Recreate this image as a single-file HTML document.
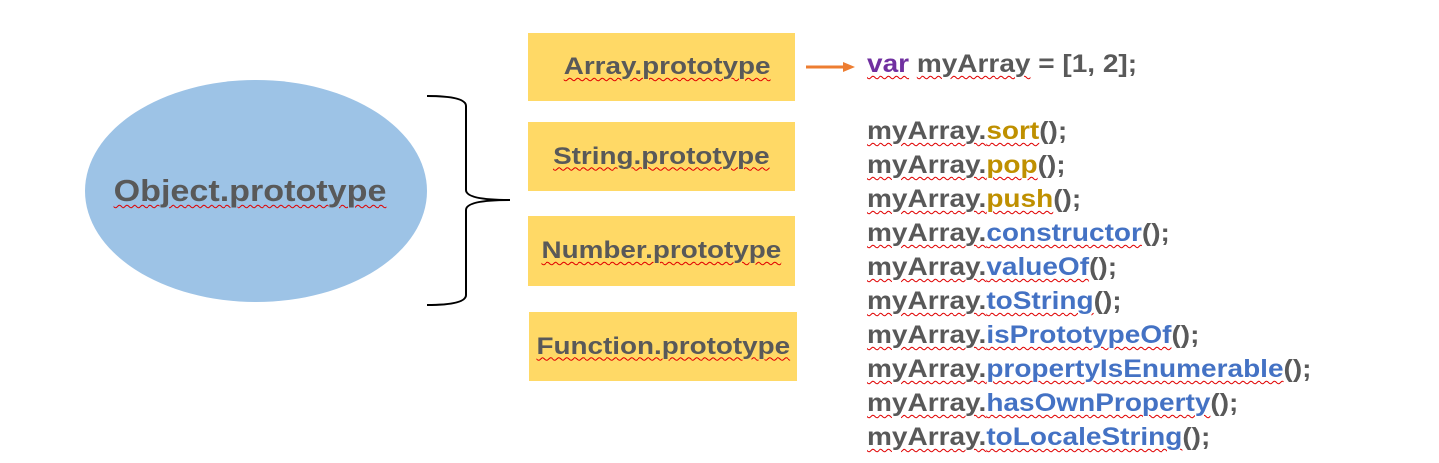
<!DOCTYPE html>
<html><head><meta charset="utf-8"><style>
body{margin:0;width:1439px;height:463px;background:#fff;position:relative;overflow:hidden;font-family:"Liberation Sans",Arial,sans-serif;font-weight:bold;color:#595959}
.u{text-decoration:underline wavy #e00000;text-decoration-thickness:1px;text-underline-offset:3px}
.box{position:absolute;background:#FFD966;display:flex;align-items:center;justify-content:center;font-size:24px}
.box span{display:inline-block;transform:scaleX(1.16)}
.code{position:absolute;left:867px;font-size:25px;line-height:34px;white-space:nowrap;transform:scaleX(1.12);transform-origin:0 0}
.g{color:#BF9000}.b{color:#4472C4}.p{color:#7030A0}
</style></head><body>
<svg style="position:absolute;left:0;top:0" width="1439" height="463">
<ellipse cx="256" cy="191" rx="171" ry="111" fill="#9DC3E6"/>
<path d="M427 96 Q466 96 466 106 L466 190 Q466 200 510 200 Q466 200 466 210 L466 295 Q466 305 427 305" fill="none" stroke="#000" stroke-width="2"/>
<line x1="806" y1="67" x2="845" y2="67" stroke="#ED7D31" stroke-width="3"/>
<path d="M843 62 L855 67 L843 72 Z" fill="#ED7D31"/>
</svg>
<div style="position:absolute;left:79px;top:173px;width:342px;text-align:center;font-size:31px"><span class="u" style="display:inline-block;transform:scaleX(1.1)">Object.prototype</span></div>
<div class="box" style="left:528px;top:33px;width:267px;height:68px;padding-left:12px;box-sizing:border-box"><span class="u">Array.prototype</span></div>
<div class="box" style="left:528px;top:122px;width:267px;height:69px"><span class="u">String.prototype</span></div>
<div class="box" style="left:528px;top:216px;width:267px;height:70px"><span class="u">Number.prototype</span></div>
<div class="box" style="left:529px;top:312px;width:268px;height:69px"><span class="u">Function.prototype</span></div>
<div class="code" style="top:47px"><span class="u p">var</span> <span class="u">myArray</span> = [1, 2];</div>
<div class="code" style="top:114px">
<div><span class="u">myArray.<span class="g">sort</span></span>();</div>
<div><span class="u">myArray.<span class="g">pop</span></span>();</div>
<div><span class="u">myArray.<span class="g">push</span></span>();</div>
<div><span class="u">myArray.<span class="b">constructor</span></span>();</div>
<div><span class="u">myArray.<span class="b">valueOf</span></span>();</div>
<div><span class="u">myArray.<span class="b">toString</span></span>();</div>
<div><span class="u">myArray.<span class="b">isPrototypeOf</span></span>();</div>
<div><span class="u">myArray.<span class="b">propertyIsEnumerable</span></span>();</div>
<div><span class="u">myArray.<span class="b">hasOwnProperty</span></span>();</div>
<div><span class="u">myArray.<span class="b">toLocaleString</span></span>();</div>
</div>
</body></html>
